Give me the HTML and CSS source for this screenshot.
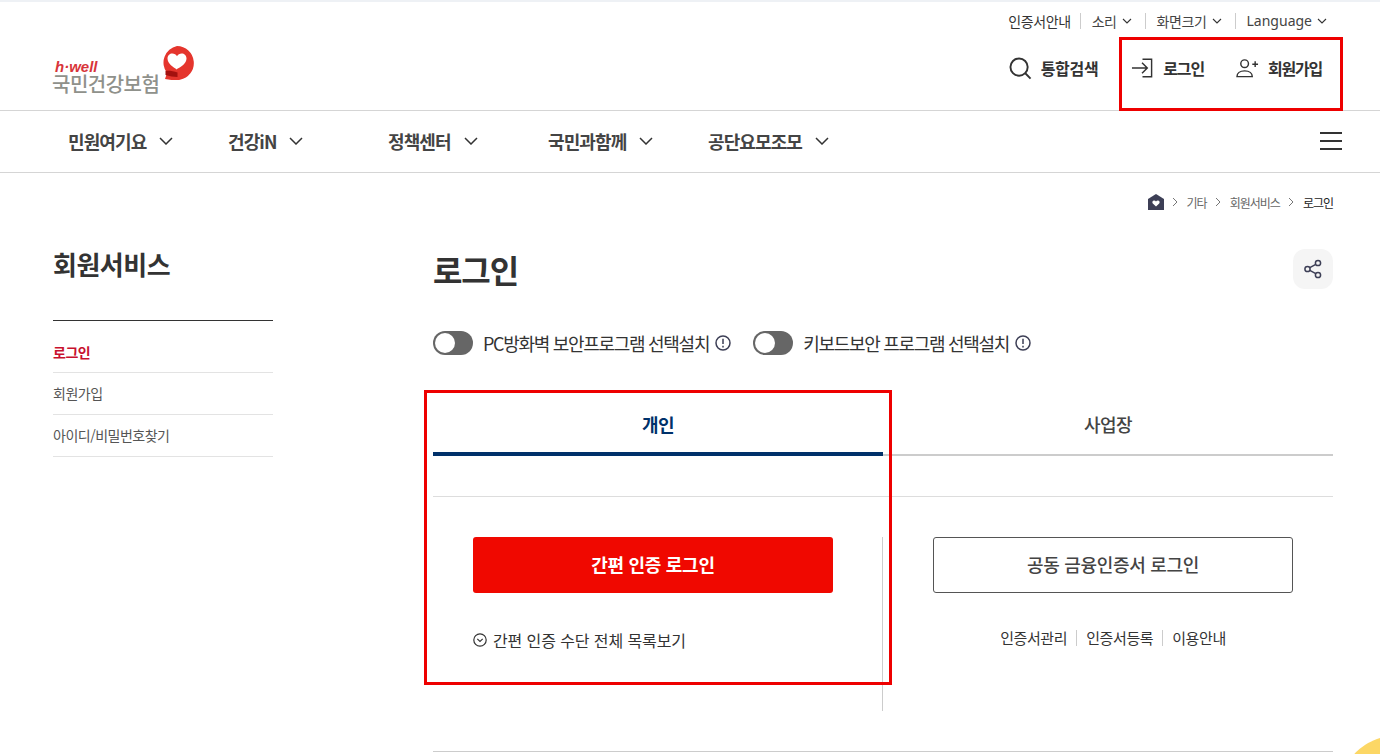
FILE: index.html
```html
<!DOCTYPE html>
<html lang="ko">

<head>
    <meta charset="UTF-8">
    <title>로그인 - 국민건강보험</title>
    <link rel="stylesheet" href="styles.css">
</head>

<body>
    <div class="page">
        <!-- Top utility links -->
        <div class="util">
            <a class="util-item">인증서안내</a>
            <a class="util-item">소리
                <svg class="chev-sm" viewBox="0 0 10 6"><path d="M1 1l4 4 4-4" /></svg>
            </a>
            <a class="util-item">화면크기
                <svg class="chev-sm" viewBox="0 0 10 6"><path d="M1 1l4 4 4-4" /></svg>
            </a>
            <a class="util-item util-lang">Language
                <svg class="chev-sm" viewBox="0 0 10 6"><path d="M1 1l4 4 4-4" /></svg>
            </a>
        </div>

        <!-- Logo and actions -->
        <header class="head">
            <a class="logo">
                <span class="logo-text">
                    <em>h·well</em>
                    <strong>국민건강보험</strong>
                </span>
                <svg class="logo-mark" viewBox="0 0 34 34">
                    <path d="M17 0a17 17 0 0 1 3 33.700c-4 .8-9 .6-15-.7l2-6A17 17 0 0 1 17 0z" fill="#e5352d" />
                    <path d="M17 23.500c-4-2.500-9.500-6-9.500-11 0-3 2.300-5 4.800-5 2 0 3.700 1 4.700 2.800 1-1.800 2.700-2.800 4.700-2.800 2.500 0 4.800 2 4.800 5 0 5-5.500 8.500-10.500 11z" fill="#fff" />
                    <path d="M5.500 25c3.500-.4 8 .1 12 1.600V31c-4-.2-8-.7-12-2z" fill="#a3110f" />
                </svg>
            </a>
            <div class="actions">
                <a class="action action-search">
                    <svg class="icon-search" viewBox="0 0 24 24"><circle cx="10.500" cy="10.500" r="9" /><path d="M17 17l5.500 5.500" /></svg>
                    통합검색
                </a>
                <a class="action action-login">
                    <svg class="icon-login" viewBox="0 0 24 20"><path d="M1 10h16M11.500 4.500L17 10l-5.500 5.500M12 .8h9.500v18.400H12" /></svg>
                    로그인
                </a>
                <a class="action action-join">
                    <svg class="icon-join" viewBox="0 0 24 20"><circle cx="9" cy="5.500" r="4" /><path d="M1 19c0-3.500 3-6 8-6s8 2.500 8 6zM17 6h6M20 3v6" /></svg>
                    회원가입
                </a>
            </div>
        </header>

        <!-- Main navigation -->
        <nav class="gnb">
            <a class="gnb-item">민원여기요 <svg class="chev" viewBox="0 0 14 8"><path d="M1 1l6 6 6-6" /></svg></a>
            <a class="gnb-item">건강iN <svg class="chev" viewBox="0 0 14 8"><path d="M1 1l6 6 6-6" /></svg></a>
            <a class="gnb-item">정책센터 <svg class="chev" viewBox="0 0 14 8"><path d="M1 1l6 6 6-6" /></svg></a>
            <a class="gnb-item">국민과함께 <svg class="chev" viewBox="0 0 14 8"><path d="M1 1l6 6 6-6" /></svg></a>
            <a class="gnb-item">공단요모조모 <svg class="chev" viewBox="0 0 14 8"><path d="M1 1l6 6 6-6" /></svg></a>
            <div class="burger"><span></span><span></span><span></span></div>
        </nav>

        <!-- Breadcrumb -->
        <div class="crumbs">
            <svg class="icon-home" viewBox="0 0 16 16">
                <path d="M8 0l8 5v11H0V5z" fill="#3d3f56" />
                <path d="M8 12.500L4.800 9.500c-1-1.200-.2-3 1.300-3 .8 0 1.500.4 1.900 1 .4-.6 1.100-1 1.900-1 1.500 0 2.300 1.800 1.300 3z" fill="#fff" />
            </svg>
            <svg class="crumb-sep" viewBox="0 0 6 10"><path d="M1 1l4 4-4 4" /></svg>
            <span>기타</span>
            <svg class="crumb-sep" viewBox="0 0 6 10"><path d="M1 1l4 4-4 4" /></svg>
            <span>회원서비스</span>
            <svg class="crumb-sep" viewBox="0 0 6 10"><path d="M1 1l4 4-4 4" /></svg>
            <span class="crumb-current">로그인</span>
        </div>

        <div class="layout">
            <!-- Side menu -->
            <aside class="side">
                <h2 class="side-title">회원서비스</h2>
                <ul class="side-menu">
                    <li class="active">로그인</li>
                    <li>회원가입</li>
                    <li>아이디/비밀번호찾기</li>
                </ul>
            </aside>

            <main class="content">
                <div class="title-row">
                    <h1 class="title">로그인</h1>
                    <button class="share">
                        <svg viewBox="0 0 20 20"><circle cx="15" cy="4" r="2.600" /><circle cx="4.500" cy="10" r="2.600" /><circle cx="15" cy="16" r="2.600" /><path d="M6.800 8.700l6-3.400M6.800 11.300l6 3.400" /></svg>
                    </button>
                </div>

                <div class="toggles">
                    <div class="toggle-row">
                        <span class="toggle"></span>
                        <span class="toggle-label">PC방화벽 보안프로그램 선택설치</span>
                        <svg class="info-mark" viewBox="0 0 16 16"><circle cx="8" cy="8" r="7" /><path d="M8 3.800v5.200M8 10.800v1.600" /></svg>
                    </div>
                    <div class="toggle-row">
                        <span class="toggle"></span>
                        <span class="toggle-label">키보드보안 프로그램 선택설치</span>
                        <svg class="info-mark" viewBox="0 0 16 16"><circle cx="8" cy="8" r="7" /><path d="M8 3.800v5.200M8 10.800v1.600" /></svg>
                    </div>
                </div>

                <div class="tabs">
                    <div class="tab active">개인</div>
                    <div class="tab">사업장</div>
                </div>

                <div class="login-box">
                    <div class="login-col login-left">
                        <a class="btn btn-red">간편 인증 로그인</a>
                        <a class="more">
                            <svg viewBox="0 0 14 14"><circle cx="7" cy="7" r="6.200" /><path d="M4.300 5.900L7 8.500l2.700-2.600" /></svg>
                            간편 인증 수단 전체 목록보기
                        </a>
                    </div>
                    <div class="login-col login-right">
                        <a class="btn btn-line">공동 금융인증서 로그인</a>
                        <div class="cert-links">
                            <a>인증서관리</a>
                            <a>인증서등록</a>
                            <a>이용안내</a>
                        </div>
                    </div>
                </div>
            </main>
        </div>

        <!-- Annotations and floating button -->
        <div class="mark mark-head"></div>
        <div class="mark mark-tab"></div>
        <div class="float-ball"></div>
    </div>
</body>

</html>
```

FILE: styles.css
```css
* {
    box-sizing: border-box;
}

html,
body {
    margin: 0;
    height: 754px;
    overflow: hidden;
}

body {
    font-family: "Noto Sans CJK KR", "Noto Sans", sans-serif;
    color: #333;
    background: #fff;
}

.page {
    position: relative;
    height: 754px;
    overflow: hidden;
    border-top: 2px solid #eef1f5;
}

svg {
    fill: none;
    stroke: #333;
    flex: none;
}

/* Utility links */
.util {
    display: flex;
    justify-content: flex-end;
    align-items: center;
    height: 38px;
    padding-right: 53px;
    font-size: 14px;
    letter-spacing: -0.4px;
}

.util-item {
    display: flex;
    align-items: center;
    gap: 5px;
    height: 16px;
    line-height: 16px;
    padding: 0 13px 0 11px;
    border-left: 1px solid #ccc;
    color: #444;
}

.util-item:first-child {
    padding-right: 9px;
    border-left: 0;
    color: #333;
}

.util-lang {
    letter-spacing: 0;
    padding-right: 0;
    font-family: "Noto Sans", sans-serif;
}

.chev-sm {
    width: 10px;
    height: 6px;
    stroke-width: 1.100;
}

/* Header */
.head {
    display: flex;
    justify-content: space-between;
    align-items: flex-start;
    height: 71px;
    padding: 0 38px 0 52px;
    border-bottom: 1px solid #d5d5d5;
}

.logo {
    display: flex;
    align-items: flex-start;
    padding-top: 6px;
}

.logo-text {
    display: flex;
    flex-direction: column;
    padding-top: 14px;
}

.logo-text em {
    font-family: "Liberation Sans", sans-serif;
    font-size: 15px;
    line-height: 13px;
    font-weight: bold;
    color: #d8343a;
    margin-left: 3px;
}

.logo-text strong {
    font-size: 20px;
    line-height: 22px;
    font-weight: 500;
    color: #8f918b;
    letter-spacing: -0.5px;
}

.logo-mark {
    width: 34px;
    height: 34px;
    stroke: none;
    margin-left: 1px;
}

.actions {
    display: flex;
    align-items: center;
    height: 56px;
}

.action {
    display: flex;
    align-items: center;
    font-size: 16px;
    font-weight: 700;
    letter-spacing: -1.2px;
    color: #333;
}

.action-search {
    gap: 9px;
    margin-right: 33px;
    letter-spacing: -0.3px;
}

.action-login {
    gap: 9px;
    margin-right: 32px;
}

.action-join {
    gap: 9px;
    margin-right: 20px;
}

.icon-search {
    width: 23px;
    height: 23px;
    stroke-width: 2;
}

.icon-login,
.icon-join {
    width: 23px;
    height: 20px;
    stroke-width: 1.500;
}

/* Main navigation */
.gnb {
    display: flex;
    align-items: center;
    height: 62px;
    padding: 0 38px 2px 68px;
    border-bottom: 1px solid #d5d5d5;
}

.gnb-item {
    display: flex;
    align-items: center;
    gap: 13px;
    width: 160px;
    font-size: 18px;
    font-weight: 700;
    letter-spacing: -0.9px;
    color: #444;
}

.chev {
    width: 14px;
    height: 8px;
    stroke-width: 1.500;
}

.burger {
    display: flex;
    flex-direction: column;
    gap: 6px;
    width: 22px;
    margin-left: auto;
}

.burger span {
    height: 2px;
    background: #333;
}

/* Breadcrumb */
.crumbs {
    display: flex;
    justify-content: flex-end;
    align-items: center;
    gap: 8px;
    height: 20px;
    margin-top: 19px;
    padding-right: 47px;
    font-size: 12px;
    letter-spacing: -1px;
    color: #666;
}

.icon-home {
    width: 16px;
    height: 16px;
    stroke: none;
}

.crumb-sep {
    width: 6px;
    height: 10px;
    margin-right: 1px;
    stroke: #777;
}

.crumb-current {
    color: #222;
}

/* Page layout */
.layout {
    display: flex;
    padding: 0 47px 0 53px;
}

.side {
    width: 220px;
    margin-right: 160px;
}

.side-title {
    margin: 35px 0 39px;
    font-size: 26px;
    line-height: 34px;
    font-weight: 700;
    letter-spacing: -0.5px;
    color: #333;
}

.side-menu {
    margin: 0;
    padding: 0;
    list-style: none;
    border-top: 1px solid #333;
    font-size: 14px;
    letter-spacing: -0.5px;
    color: #555;
}

.side-menu li {
    height: 42px;
    line-height: 41px;
    border-bottom: 1px solid #e3e3e3;
}

.side-menu li:first-child {
    height: 52px;
    line-height: 62px;
}

.side-menu li.active {
    color: #c8102e;
    font-weight: 700;
}

.content {
    width: 900px;
}

.title-row {
    display: flex;
    justify-content: space-between;
    align-items: center;
    height: 40px;
    margin-top: 37px;
}

.title {
    margin: 0;
    font-size: 32px;
    line-height: 40px;
    font-weight: 700;
    letter-spacing: -1.1px;
    color: #333;
}

.share {
    display: flex;
    align-items: center;
    justify-content: center;
    width: 40px;
    height: 40px;
    padding: 0;
    border: 0;
    border-radius: 12px;
    background: #f5f5f5;
}

.share svg {
    width: 20px;
    height: 20px;
    stroke: #3d3f56;
    stroke-width: 1.500;
}

/* Toggles */
.toggles {
    display: flex;
    gap: 22px;
    margin-top: 42px;
}

.toggle-row {
    display: flex;
    align-items: center;
    height: 24px;
}

.toggle {
    position: relative;
    width: 40px;
    height: 24px;
    margin-right: 10px;
    border-radius: 12px;
    background: #666;
}

.toggle::before {
    content: "";
    position: absolute;
    left: 2px;
    top: 2px;
    width: 20px;
    height: 20px;
    border-radius: 50%;
    background: #fff;
}

.toggle-label {
    font-size: 18px;
    letter-spacing: -1.3px;
    color: #333;
}

.info-mark {
    width: 16px;
    height: 16px;
    margin-left: 6px;
    stroke: #3d3f56;
    stroke-width: 1.500;
}

/* Tabs */
.tabs {
    display: flex;
    margin-top: 35px;
}

.tab {
    flex: 1;
    height: 66px;
    padding-top: 8px;
    line-height: 52px;
    text-align: center;
    font-size: 18px;
    font-weight: 500;
    letter-spacing: -0.6px;
    color: #444;
    border-bottom: 2px solid #ccc;
}

.tab.active {
    color: #00316a;
    font-weight: 700;
    border-bottom: 4px solid #00316a;
}

/* Login box */
.login-box {
    display: flex;
    height: 256px;
    margin-top: 40px;
    padding-top: 40px;
    border-top: 1px solid #ddd;
    border-bottom: 1px solid #ccc;
}

.login-col {
    display: flex;
    flex-direction: column;
    align-items: center;
    width: 450px;
    height: 174px;
}

.login-left {
    align-items: flex-start;
    padding-left: 40px;
    border-right: 1px solid #ccc;
}

.login-right {
    padding-left: 10px;
}

.btn {
    display: block;
    width: 360px;
    height: 56px;
    line-height: 52px;
    border-radius: 3px;
    text-align: center;
    font-size: 18px;
    letter-spacing: -0.3px;
}

.btn-red {
    background: #f00800;
    color: #fff;
    font-weight: 700;
    line-height: 54px;
}

.btn-line {
    border: 1px solid #555;
    color: #444;
    font-weight: 500;
}

.more {
    display: flex;
    align-items: center;
    gap: 6px;
    margin-top: 35px;
    font-size: 16px;
    line-height: 24px;
    color: #333;
    letter-spacing: -0.1px;
}

.more svg {
    width: 14px;
    height: 14px;
    stroke-width: 1.200;
}

.cert-links {
    display: flex;
    margin-top: 37px;
    font-size: 15px;
    line-height: 16px;
    letter-spacing: -0.4px;
    color: #333;
}

.cert-links a {
    padding: 0 9px;
    border-left: 1px solid #ccc;
}

.cert-links a:first-child {
    border-left: 0;
}

/* Red annotation boxes */
.mark {
    position: absolute;
    border: 3px solid #ee0000;
}

.mark-head {
    left: 1119px;
    top: 35px;
    width: 224px;
    height: 74px;
}

.mark-tab {
    left: 424px;
    top: 388px;
    width: 468px;
    height: 295px;
}

.float-ball {
    position: absolute;
    left: 1340px;
    top: 734px;
    width: 110px;
    height: 110px;
    border-radius: 50%;
    background: #fcd765;
}
```
